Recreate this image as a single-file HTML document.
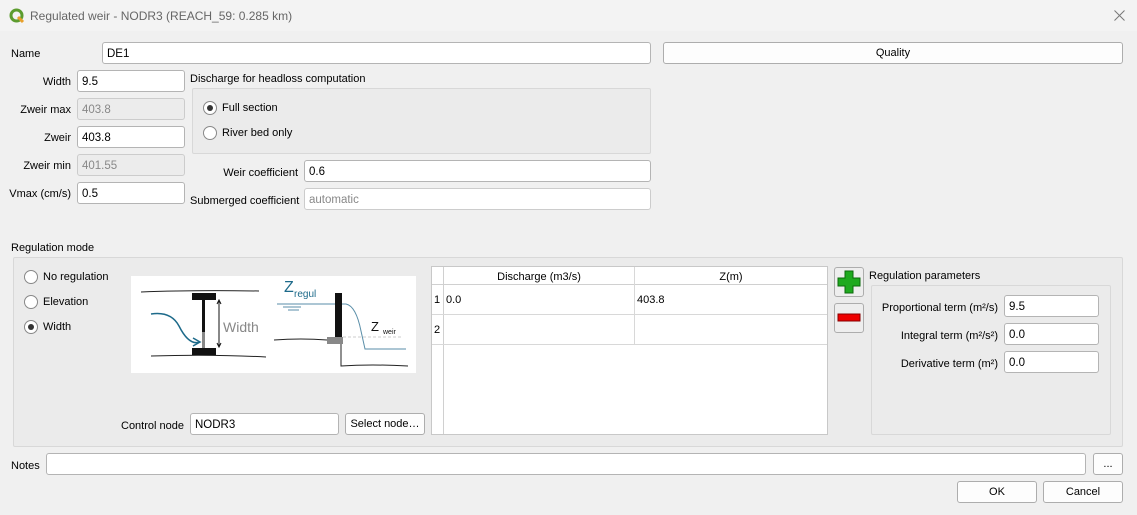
<!DOCTYPE html>
<html><head><meta charset="utf-8"><style>
*{box-sizing:border-box;margin:0;padding:0}
body{width:1137px;height:515px;overflow:hidden;background:#f0f0f0;font-family:"Liberation Sans",sans-serif;font-size:11px;color:#000;position:relative}
.a{position:absolute}
.in{position:absolute;background:#fff;border:1px solid #b4b4b4;border-radius:3px;height:22px;padding:4px 4px 3px;font-size:11.5px;line-height:14px}
.dis{background:#ececec;border-color:#ccc;color:#888}
.lbl{position:absolute;white-space:nowrap;line-height:14px}
.r{text-align:right}
.btn{position:absolute;background:#fdfdfd;border:1px solid #adadad;border-radius:3px;text-align:center;line-height:20px;height:22px;font-size:11px}
.rad{position:absolute;width:14px;height:14px;border:1px solid #888;border-radius:50%;background:#fff}
.rad.on::after{content:"";position:absolute;left:3px;top:3px;width:6px;height:6px;border-radius:50%;background:#333}
.grp{position:absolute;border:1px solid #d8d8d8;border-radius:2px;background:#ebebeb}
</style></head><body>
<div class="a" style="left:0;top:0;width:1137px;height:31px;background:#f3f3f3"></div>
<svg class="a" style="left:9px;top:8px" width="16" height="16" viewBox="0 0 16 16"><circle cx="7.5" cy="7.5" r="5.5" fill="none" stroke="#5c9c2e" stroke-width="3"/><path d="M9 9 L14 14" stroke="#e8a02b" stroke-width="3"/></svg>
<div class="lbl" style="left:30px;top:9px;font-size:12px;color:#666">Regulated weir - NODR3 (REACH_59: 0.285 km)</div>
<svg class="a" style="left:1114px;top:10px" width="11" height="11"><path d="M0.5 0.5L10.5 10.5M10.5 0.5L0.5 10.5" stroke="#777" stroke-width="1"/></svg>

<div class="lbl" style="left:11px;top:47px">Name</div>
<div class="in" style="left:102px;top:42px;width:549px">DE1</div>
<div class="btn" style="left:663px;top:42px;width:460px">Quality</div>

<div class="lbl r" style="left:10px;top:75px;width:61px">Width</div>
<div class="in" style="left:77px;top:70px;width:108px">9.5</div>
<div class="lbl r" style="left:10px;top:103px;width:61px">Zweir max</div>
<div class="in dis" style="left:77px;top:98px;width:108px">403.8</div>
<div class="lbl r" style="left:10px;top:131px;width:61px">Zweir</div>
<div class="in" style="left:77px;top:126px;width:108px">403.8</div>
<div class="lbl r" style="left:10px;top:159px;width:61px">Zweir min</div>
<div class="in dis" style="left:77px;top:154px;width:108px">401.55</div>
<div class="lbl r" style="left:5px;top:187px;width:66px">Vmax (cm/s)</div>
<div class="in" style="left:77px;top:182px;width:108px">0.5</div>

<div class="lbl" style="left:190px;top:72px">Discharge for headloss computation</div>
<div class="grp" style="left:192px;top:88px;width:459px;height:66px"></div>
<div class="rad on" style="left:203px;top:101px"></div><div class="lbl" style="left:222px;top:101px">Full section</div>
<div class="rad" style="left:203px;top:126px"></div><div class="lbl" style="left:222px;top:126px">River bed only</div>
<div class="lbl r" style="left:190px;top:166px;width:108px">Weir coefficient</div>
<div class="in" style="left:304px;top:160px;width:347px">0.6</div>
<div class="lbl" style="left:190px;top:194px">Submerged coefficient</div>
<div class="in dis" style="left:304px;top:188px;width:347px;background:#fff">automatic</div>

<div class="lbl" style="left:11px;top:241px">Regulation mode</div>
<div class="grp" style="left:13px;top:257px;width:1110px;height:190px"></div>
<div class="rad" style="left:24px;top:270px"></div><div class="lbl" style="left:43px;top:270px">No regulation</div>
<div class="rad" style="left:24px;top:295px"></div><div class="lbl" style="left:43px;top:295px">Elevation</div>
<div class="rad on" style="left:24px;top:320px"></div><div class="lbl" style="left:43px;top:320px">Width</div>

<svg class="a" style="left:131px;top:276px;background:#fff" width="285" height="97" viewBox="0 0 285 97">
<path d="M10 16 Q60 14 128 15" stroke="#222" fill="none"/>
<path d="M20 80 Q80 78 135 81" stroke="#222" fill="none"/>
<rect x="61" y="17" width="24" height="7" fill="#111"/>
<rect x="61" y="72" width="24" height="7" fill="#111"/>
<rect x="71" y="24" width="3" height="32" fill="#111"/>
<rect x="71" y="56" width="3" height="16" fill="#888"/>
<path d="M88 25 V70 M86 28 L88 24 L90 28 M86 67 L88 71 L90 67" stroke="#111" fill="none"/>
<text x="92" y="56" font-size="14" fill="#888" font-family="Liberation Sans">Width</text>
<path d="M20 38 Q40 35 48 50 Q58 70 69 66" stroke="#1d6a8a" stroke-width="1.5" fill="none"/>
<path d="M62 62 L69 66 L62 70" stroke="#1d6a8a" stroke-width="1.5" fill="none"/>
<text x="153" y="16" font-size="16" fill="#1d6a8a" font-family="Liberation Sans">Z</text>
<text x="163" y="21" font-size="10" fill="#1d6a8a" font-family="Liberation Sans">regul</text>
<path d="M146 28 L215 28 Q225 30 230 55 L234 73 L275 73" stroke="#5a8ea8" fill="none"/>
<path d="M152 31 L170 31 M157 34 L168 34" stroke="#5a8ea8"/>
<rect x="204" y="17" width="7" height="46" fill="#111"/>
<rect x="196" y="61" width="16" height="7" fill="#888"/>
<path d="M212 61 L270 61" stroke="#ccc" stroke-dasharray="3,2"/>
<text x="240" y="55" font-size="13" fill="#111" font-family="Liberation Sans">Z</text>
<text x="252" y="58" font-size="7" fill="#111" font-family="Liberation Sans">weir</text>
<path d="M143 64 Q170 62 196 64" stroke="#222" fill="none"/>
<path d="M210 68 V90 Q240 88 277 90" stroke="#222" fill="none"/>
</svg>

<div class="lbl r" style="left:110px;top:419px;width:74px">Control node</div>
<div class="in" style="left:190px;top:413px;width:149px">NODR3</div>
<div class="btn" style="left:345px;top:413px;width:80px">Select node…</div>

<div class="a" style="left:431px;top:266px;width:397px;height:169px;background:#fff;border:1px solid #c8c8c8"></div>
<div class="a" style="left:432px;top:267px;width:395px;height:18px;background:#fff;border-bottom:1px solid #d0d0d0"></div>
<div class="a" style="left:443px;top:267px;width:1px;height:167px;background:#d0d0d0"></div>
<div class="a" style="left:634px;top:267px;width:1px;height:78px;background:#d8d8d8"></div>
<div class="a" style="left:432px;top:314px;width:395px;height:1px;background:#d8d8d8"></div>
<div class="a" style="left:432px;top:344px;width:395px;height:1px;background:#d8d8d8"></div>
<div class="lbl" style="left:444px;top:270px;width:190px;text-align:center">Discharge (m3/s)</div>
<div class="lbl" style="left:635px;top:270px;width:192px;text-align:center">Z(m)</div>
<div class="lbl" style="left:434px;top:293px">1</div><div class="lbl" style="left:446px;top:293px">0.0</div><div class="lbl" style="left:637px;top:293px">403.8</div>
<div class="lbl" style="left:434px;top:323px">2</div>

<div class="btn" style="left:834px;top:267px;width:30px;height:30px;background:#eee"></div>
<svg class="a" style="left:837px;top:270px" width="24" height="24"><path d="M8 1h8v7h7v8h-7v7h-8v-7h-7v-8h7z" fill="#1faa1f" stroke="#0c6a0c"/></svg>
<div class="btn" style="left:834px;top:303px;width:30px;height:30px;background:#eee"></div>
<svg class="a" style="left:837px;top:313px" width="24" height="10"><rect x="1" y="1" width="22" height="7" fill="#e00" stroke="#800"/></svg>

<div class="lbl" style="left:869px;top:269px">Regulation parameters</div>
<div class="grp" style="left:871px;top:285px;width:240px;height:150px"></div>
<div class="lbl r" style="left:872px;top:301px;width:126px">Proportional term (m²/s)</div>
<div class="in" style="left:1004px;top:295px;width:95px">9.5</div>
<div class="lbl r" style="left:872px;top:329px;width:126px">Integral term (m²/s²)</div>
<div class="in" style="left:1004px;top:323px;width:95px">0.0</div>
<div class="lbl r" style="left:872px;top:357px;width:126px">Derivative term (m²)</div>
<div class="in" style="left:1004px;top:351px;width:95px">0.0</div>

<div class="lbl" style="left:11px;top:459px">Notes</div>
<div class="in" style="left:46px;top:453px;width:1040px"></div>
<div class="btn" style="left:1093px;top:453px;width:30px">...</div>
<div class="btn" style="left:957px;top:481px;width:80px">OK</div>
<div class="btn" style="left:1043px;top:481px;width:80px">Cancel</div>
</body></html>
